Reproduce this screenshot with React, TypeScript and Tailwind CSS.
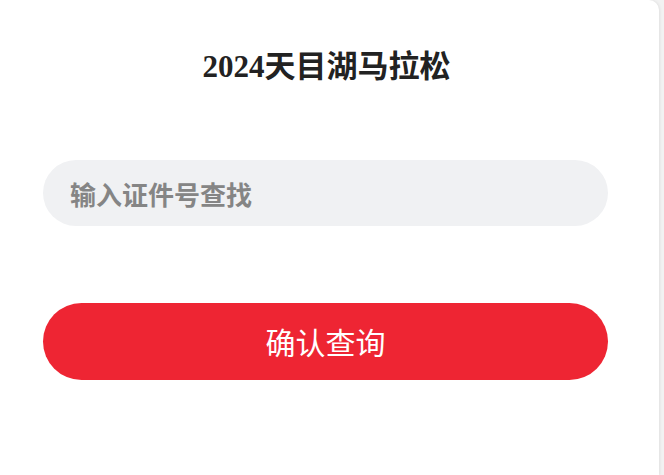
import React from 'react';

export default function App() {
  return (
    <div className="min-h-[475px] w-[664px] bg-[#f2f2f2] overflow-hidden">
      <div className="w-[659px] min-h-[475px] bg-white rounded-tr-[10px] shadow-[1px_0_3px_rgba(0,0,0,0.08)] pl-[43px] pr-[51px] pt-[48px]">
        {/* Title */}
        <h1 className="text-center text-[31px] leading-[38px] font-bold text-[#222] font-['Liberation_Serif','Noto_Sans_CJK_SC',serif] pl-[2px]">
          2024天目湖马拉松
        </h1>

        {/* Search input */}
        <div className="mt-[74px] h-[66px] rounded-full bg-[#f0f1f3] flex items-center px-[27px]">
          <input
            placeholder="输入证件号查找"
            className="w-full bg-transparent outline-none text-[26px] font-bold placeholder:text-[#858585] font-['Noto_Sans_CJK_SC',sans-serif]"
          />
        </div>

        {/* Submit */}
        <button className="mt-[77px] w-full h-[77px] rounded-full bg-[#ee2533] text-white text-[30px] font-['Noto_Sans_CJK_SC',sans-serif] flex items-center justify-center">
          确认查询
        </button>
      </div>
    </div>
  );
}
